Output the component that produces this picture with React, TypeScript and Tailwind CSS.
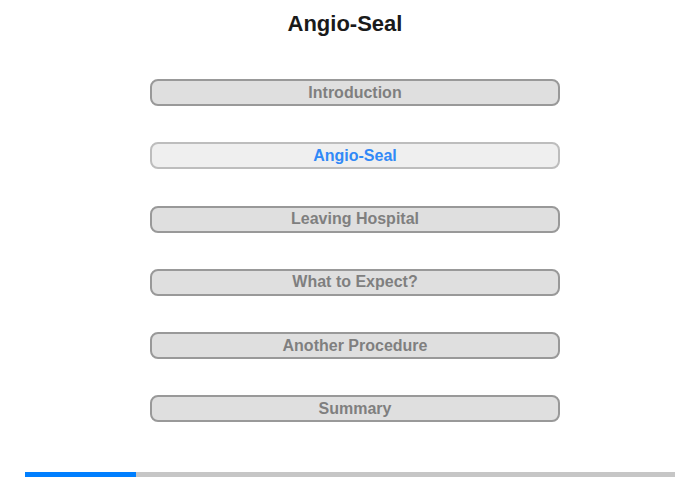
import React from "react";

const items = [
  "Introduction",
  "Angio-Seal",
  "Leaving Hospital",
  "What to Expect?",
  "Another Procedure",
  "Summary",
];

export default function App() {
  return (
    <div
      className="w-[700px] h-[480px] bg-white relative overflow-hidden"
      style={{ fontFamily: '"Liberation Sans", Arial, sans-serif' }}
    >
      <div className="pt-[10px] pr-[10px] text-center text-[22px] leading-[27px] font-bold text-[#1a1a1a]">
        Angio-Seal
      </div>
      <div className="mt-[42px] flex flex-col gap-[36.25px] pl-[150px]">
        {items.map((t, i) => {
          const active = i === 1;
          return (
            <div
              key={t}
              className={
                active
                  ? "w-[410px] h-[27px] rounded-[8px] border-2 border-[#bdbdbd] bg-[#efefef] flex items-center justify-center text-[16px] font-bold text-[#3189f7]"
                  : "w-[410px] h-[27px] rounded-[8px] border-2 border-[#999999] bg-[#dfdfdf] flex items-center justify-center text-[16px] font-bold text-[#7f7f7f]"
              }
            >
              {t}
            </div>
          );
        })}
      </div>
      <div className="absolute left-[25px] top-[472px] w-[650px] h-[5px] bg-[#c6c6c6] flex">
        <div className="w-[111px] h-full bg-[#007fff]" />
      </div>
    </div>
  );
}
